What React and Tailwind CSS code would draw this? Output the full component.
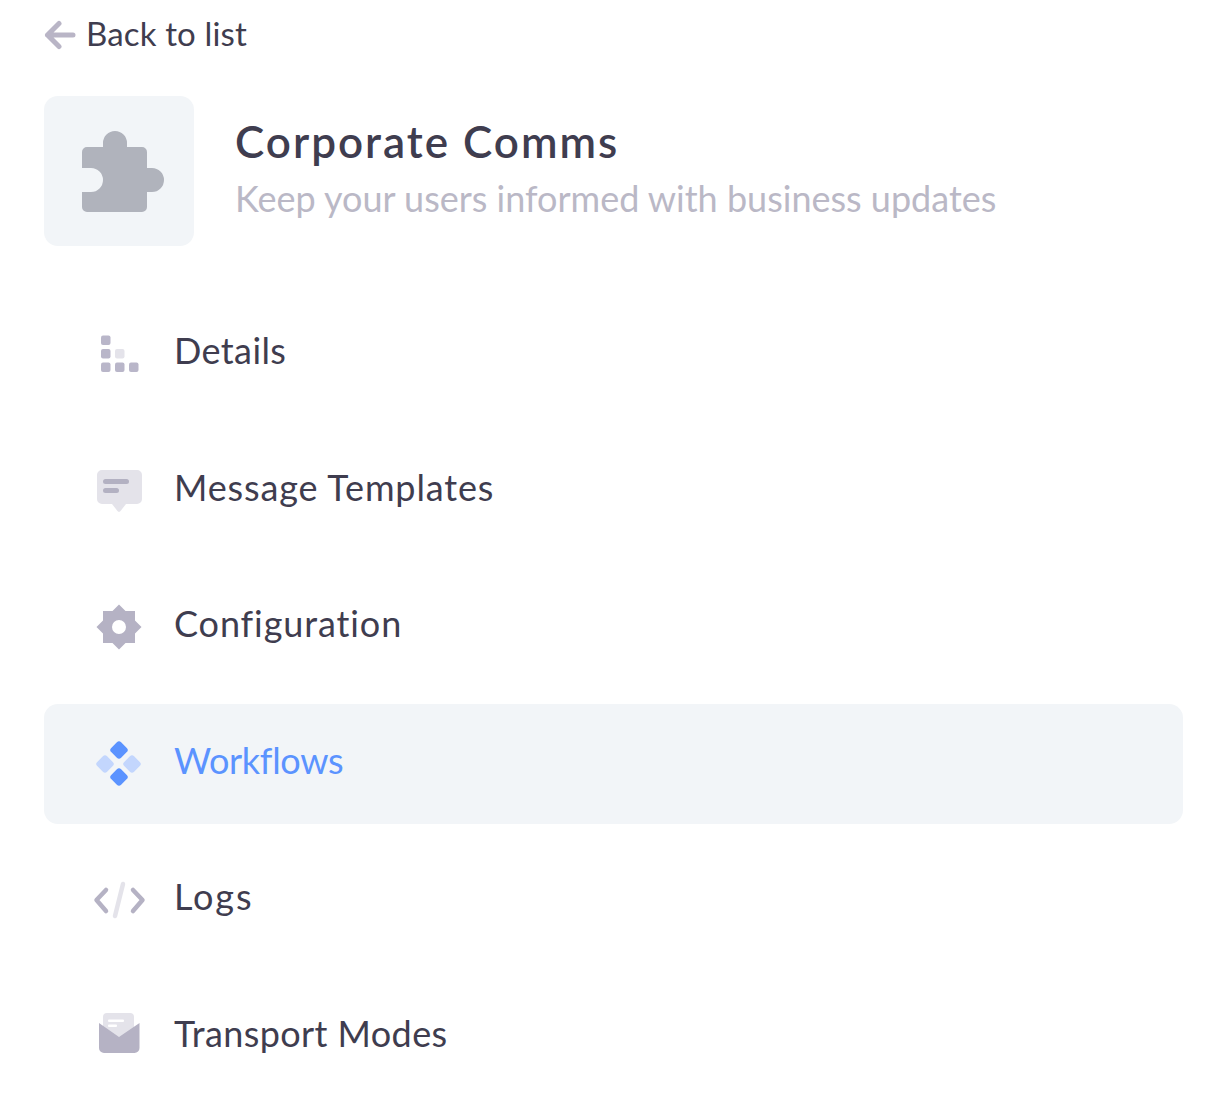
import React from 'react';

const navIcons = {
  details: (
    <>
      <rect x="12" y="11.5" width="9.5" height="9.5" rx="2" fill="#b9b6c9" />
      <rect x="12" y="25" width="9.5" height="9.5" rx="2" fill="#b9b6c9" />
      <rect x="26" y="25" width="9.5" height="9.5" rx="2" fill="#e4e3ea" />
      <rect x="12" y="38.5" width="9.5" height="9.5" rx="2" fill="#b9b6c9" />
      <rect x="26" y="38.5" width="9.5" height="9.5" rx="2" fill="#b9b6c9" />
      <rect x="40" y="38.5" width="9.5" height="9.5" rx="2" fill="#b9b6c9" />
    </>
  ),
  message: (
    <>
      <path d="M13 9H48a5 5 0 0 1 5 5V38a5 5 0 0 1-5 5H37L31.5 50a2 2 0 0 1-3 0L23 43H13a5 5 0 0 1-5-5V14a5 5 0 0 1 5-5Z" fill="#e4e3ea" />
      <rect x="14" y="18" width="26" height="5" rx="2.5" fill="#b3b1c2" />
      <rect x="14" y="27" width="16" height="5" rx="2.5" fill="#b3b1c2" />
    </>
  ),
  gear: (
    <path
      fillRule="evenodd"
      d="M30 7.5L36.5 14H46V23.5L52.5 30L46 36.5V46H36.5L30 52.5L23.5 46H14V36.5L7.5 30L14 23.5V14H23.5ZM30 23A7 7 0 1 0 30 37A7 7 0 1 0 30 23Z"
      fill="#b5b2c4"
    />
  ),
  workflows: (
    <>
      <rect x="23" y="9" width="14" height="14" rx="3" transform="rotate(45 30 16)" fill="#5b93ff" />
      <rect x="23" y="36" width="14" height="14" rx="3" transform="rotate(45 30 43)" fill="#5b93ff" />
      <rect x="9" y="23" width="14" height="14" rx="3" transform="rotate(45 16 30)" fill="#c3d6fd" />
      <rect x="36" y="23" width="14" height="14" rx="3" transform="rotate(45 43 30)" fill="#c3d6fd" />
    </>
  ),
  logs: (
    <g fill="none" strokeWidth="4.5" strokeLinecap="round" strokeLinejoin="round">
      <path d="M17 20L7.5 30L17 41" stroke="#b5b2c4" />
      <path d="M44 20L53.5 30L44 41" stroke="#b5b2c4" />
      <path d="M34 14L26 46" stroke="#e4e3ea" />
    </g>
  ),
  mail: (
    <>
      <path d="M18 6H41a4 4 0 0 1 4 4V32H14V10a4 4 0 0 1 4-4Z" fill="#e4e3ea" />
      <rect x="19" y="12.5" width="16" height="2.5" rx="1" fill="#ffffff" />
      <rect x="19" y="17.5" width="9" height="2.5" rx="1" fill="#ffffff" />
      <path d="M10 16L30 30L50.5 16V41a5 5 0 0 1-5 5H15a5 5 0 0 1-5-5Z" fill="#b5b2c4" />
    </>
  ),
};

const navItems = [
  { label: 'Details', icon: 'details', tracking: 'tracking-[0.4px]' },
  { label: 'Message Templates', icon: 'message', tracking: 'tracking-[0.85px]' },
  { label: 'Configuration', icon: 'gear', tracking: 'tracking-[0.9px]' },
  { label: 'Workflows', icon: 'workflows', tracking: 'tracking-[-0.3px]', active: true },
  { label: 'Logs', icon: 'logs', tracking: 'tracking-[1.9px]' },
  { label: 'Transport Modes', icon: 'mail', tracking: 'tracking-[0.4px]' },
];

export default function App() {
  return (
    <div className="min-h-[1115px] bg-white pl-[44px] pr-[22px] pt-[15px] font-['Lato',sans-serif] text-[#3f3d4f] [font-variant-ligatures:none]">
      {/* Back link */}
      <a className="flex h-[40px] items-center gap-[10px] text-[33px] leading-none tracking-[0.15px]">
        <svg width="32" height="32" viewBox="0 0 32 32" fill="none" stroke="#b9b5c6" strokeWidth="5" strokeLinecap="round" strokeLinejoin="round">
          <path d="M3.5 16H29M15 4.5L3.5 16L15 27.5" />
        </svg>
        <span className="pb-[3px]">Back to list</span>
      </a>

      {/* Header */}
      <div className="mt-[41px] flex items-center gap-[41px]">
        <div className="flex h-[150px] w-[150px] items-center justify-center rounded-[14px] bg-[#f2f5f8]">
          <svg className="ml-[8px]" width="82" height="81" viewBox="0 0 82 81" fill="#b0b3bc">
            <path d="M5 16H21V12A12 12 0 0 1 45 12V16H60A5 5 0 0 1 65 21V37H70A12 12 0 0 1 70 61H65V76A5 5 0 0 1 60 81H5A5 5 0 0 1 0 76V61H9A12 12 0 0 0 9 37H0V21A5 5 0 0 1 5 16Z" />
          </svg>
        </div>
        <div className="flex flex-col gap-[13px] pb-[8px]">
          <h1 className="text-[44px] font-semibold leading-[48px] tracking-[2px]">Corporate Comms</h1>
          <p className="text-[36px] leading-[40px] text-[#bab8c6]">Keep your users informed with business updates</p>
        </div>
      </div>

      {/* Nav */}
      <nav className="mt-[48px] flex flex-col gap-[16.5px]">
        {navItems.map((item) => (
          <div
            key={item.label}
            className={item.active
              ? 'flex h-[120px] items-center gap-[25px] rounded-[14px] bg-[#f2f5f8] pl-[45px] text-[#5b93ff]'
              : 'flex h-[120px] items-center gap-[25px] rounded-[14px] pl-[45px]'}
          >
            <svg width="60" height="60" viewBox="0 0 60 60">{navIcons[item.icon]}</svg>
            <span className={`pb-[8px] text-[36px] leading-none ${item.tracking}`}>{item.label}</span>
          </div>
        ))}
      </nav>
    </div>
  );
}
